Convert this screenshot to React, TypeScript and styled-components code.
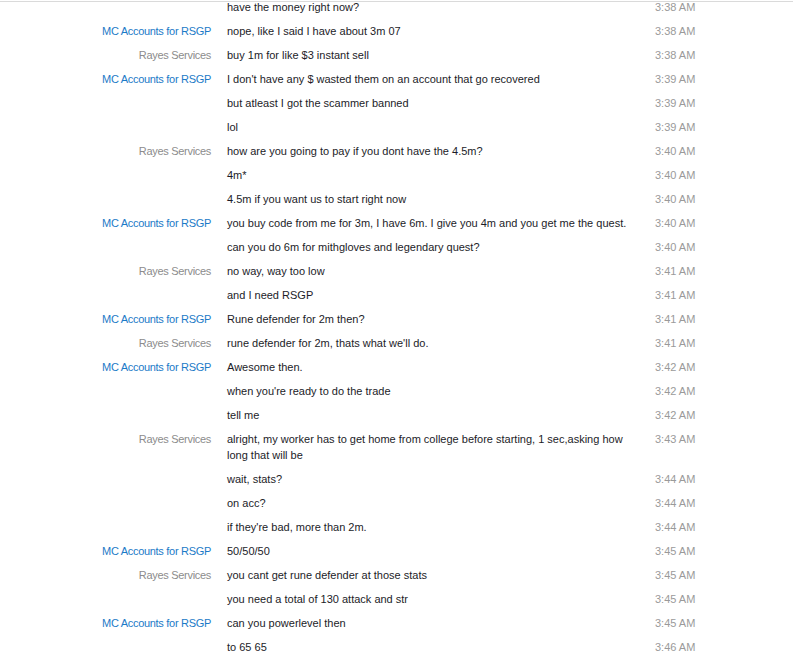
import styled, { createGlobalStyle } from "styled-components";

const GlobalStyle = createGlobalStyle`
  html, body {
    margin: 0;
    padding: 0;
    background: #ffffff;
  }
  body {
    font-family: "Liberation Sans", Arial, sans-serif;
    font-size: 11px;
    overflow: hidden;
  }
`;

type Sender = "mc" | "rayes" | null;

interface Message {
  from: Sender;
  text: string;
  time: string;
}

const messages: Message[] = [
  { from: null, text: "have the money right now?", time: "3:38 AM" },
  { from: "mc", text: "nope, like I said I have about 3m 07", time: "3:38 AM" },
  { from: "rayes", text: "buy 1m for like $3 instant sell", time: "3:38 AM" },
  { from: "mc", text: "I don't have any $ wasted them on an account that go recovered", time: "3:39 AM" },
  { from: null, text: "but atleast I got the scammer banned", time: "3:39 AM" },
  { from: null, text: "lol", time: "3:39 AM" },
  { from: "rayes", text: "how are you going to pay if you dont have the 4.5m?", time: "3:40 AM" },
  { from: null, text: "4m*", time: "3:40 AM" },
  { from: null, text: "4.5m if you want us to start right now", time: "3:40 AM" },
  { from: "mc", text: "you buy code from me for 3m, I have 6m. I give you 4m and you get me the quest.", time: "3:40 AM" },
  { from: null, text: "can you do 6m for mithgloves and legendary quest?", time: "3:40 AM" },
  { from: "rayes", text: "no way, way too low", time: "3:41 AM" },
  { from: null, text: "and I need RSGP", time: "3:41 AM" },
  { from: "mc", text: "Rune defender for 2m then?", time: "3:41 AM" },
  { from: "rayes", text: "rune defender for 2m, thats what we'll do.", time: "3:41 AM" },
  { from: "mc", text: "Awesome then.", time: "3:42 AM" },
  { from: null, text: "when you're ready to do the trade", time: "3:42 AM" },
  { from: null, text: "tell me", time: "3:42 AM" },
  {
    from: "rayes",
    text: "alright, my worker has to get home from college before starting, 1 sec,asking how long that will be",
    time: "3:43 AM",
  },
  { from: null, text: "wait, stats?", time: "3:44 AM" },
  { from: null, text: "on acc?", time: "3:44 AM" },
  { from: null, text: "if they're bad, more than 2m.", time: "3:44 AM" },
  { from: "mc", text: "50/50/50", time: "3:45 AM" },
  { from: "rayes", text: "you cant get rune defender at those stats", time: "3:45 AM" },
  { from: null, text: "you need a total of 130 attack and str", time: "3:45 AM" },
  { from: "mc", text: "can you powerlevel then", time: "3:45 AM" },
  { from: null, text: "to 65 65", time: "3:46 AM" },
];

const senderNames: Record<"mc" | "rayes", string> = {
  mc: "MC Accounts for RSGP",
  rayes: "Rayes Services",
};

const Viewport = styled.div`
  margin-top: 1px;
  height: 658px;
  border-top: 1px solid #dadada;
  overflow: hidden;
  box-sizing: border-box;
`;

const Log = styled.div`
  margin-top: -7px;
  display: flex;
  flex-direction: column;
`;

const Row = styled.div`
  display: grid;
  grid-template-columns: 211px 413px 138px;
  column-gap: 16px;
  padding: 4px 0;
  line-height: 16px;
`;

const Name = styled.div<{ $who: Sender }>`
  text-align: right;
  white-space: nowrap;
  letter-spacing: -0.3px;
  color: ${(p) => (p.$who === "mc" ? "#1b7ac7" : "#8c8c8c")};
`;

const Text = styled.div`
  color: #1c1c28;
`;

const Time = styled.div`
  color: #9a9a9a;
  white-space: nowrap;
  margin-left: -1px;
`;

export default function App() {
  return (
    <>
      <GlobalStyle />
      <Viewport>
        <Log>
          {messages.map((m, idx) => (
            <Row key={idx}>
              <Name $who={m.from}>{m.from ? senderNames[m.from] : ""}</Name>
              <Text>{m.text}</Text>
              <Time>{m.time}</Time>
            </Row>
          ))}
        </Log>
      </Viewport>
    </>
  );
}
